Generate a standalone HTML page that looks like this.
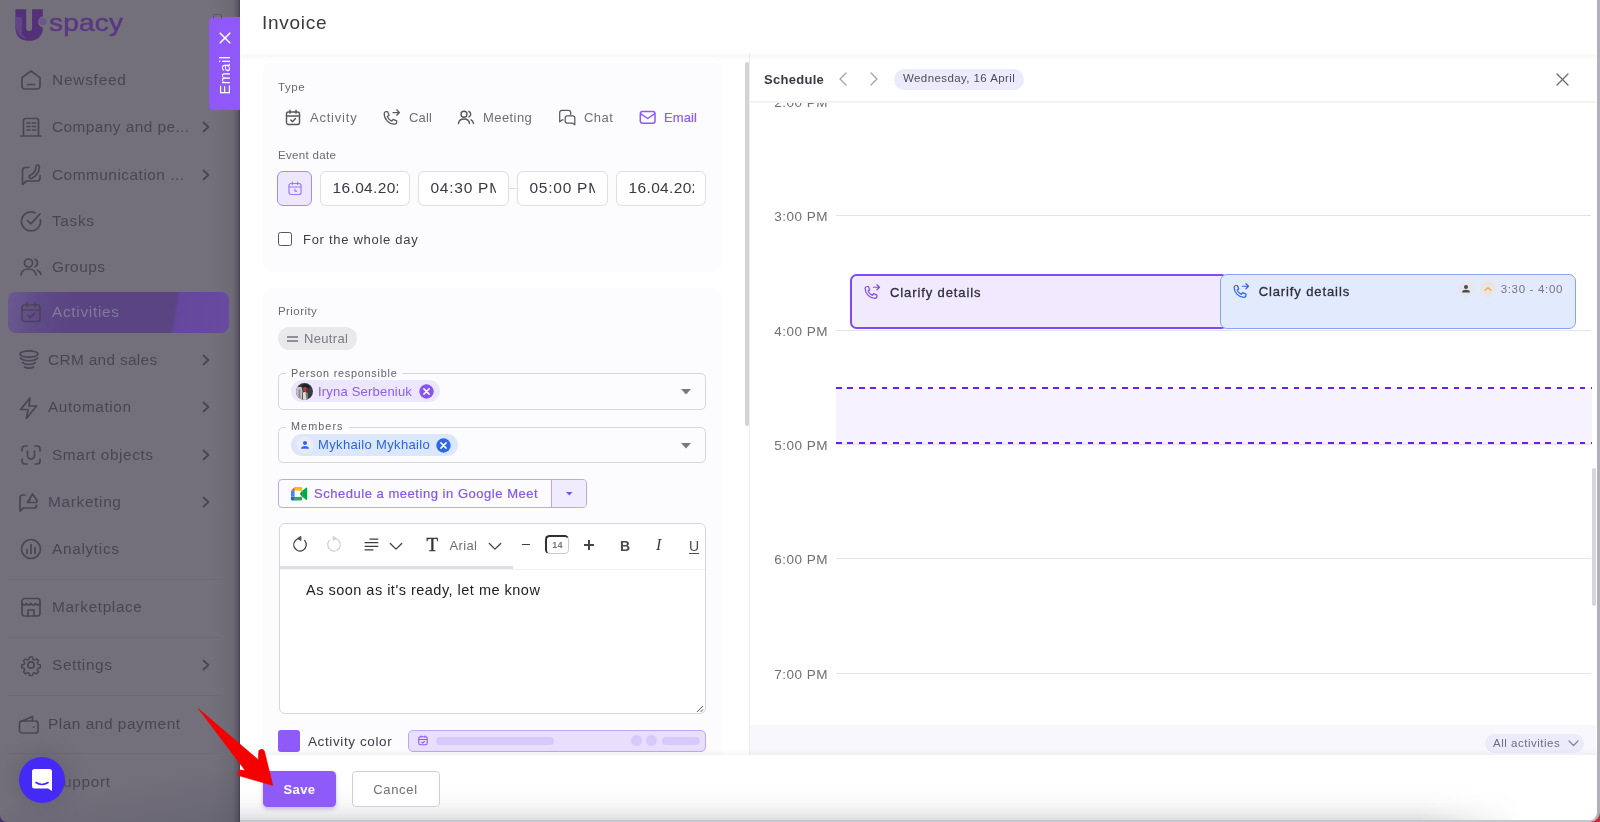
<!DOCTYPE html>
<html lang="en">
<head>
<meta charset="utf-8">
<title>Invoice</title>
<style>
*{box-sizing:border-box;margin:0;padding:0}
html,body{width:1600px;height:822px;overflow:hidden;background:#fff}
body{font-family:"Liberation Sans",Arial,sans-serif;color:#3a3946;position:relative}
.abs{position:absolute}
.t{position:absolute;white-space:nowrap;line-height:1}
svg{position:absolute;overflow:visible}
/* sidebar */
#side{position:absolute;left:0;top:0;width:240px;height:822px;background:#73707c;overflow:hidden;border-bottom-left-radius:7px}
#side .strip{position:absolute;left:212px;top:0;width:28px;height:822px;background:linear-gradient(90deg,#73707c 0,#716e7a 30%,#6d6a76 75%,#6c6875 100%)}
#side .edge{position:absolute;left:233px;top:0;width:7px;height:822px;background:linear-gradient(90deg,#6c6875 0,#625e6b 45%,#5c5865 70%,#4d4857 88%,#4b4655 100%)}
#side .it{position:absolute;white-space:nowrap;font-size:15.400px;line-height:20px;color:#4b4553;margin-top:-.6px}
#side .dv{position:absolute;left:8px;width:214px;height:1px;background:#6c6975}
#side svg{fill:none;stroke:#4b4553;stroke-width:1.7;stroke-linecap:round;stroke-linejoin:round}
#side .chev{stroke-width:1.7}
/* main */
#main{position:absolute;left:240px;top:0;width:1357px;height:822px;background:#fff;overflow:hidden}
#rightedge{position:absolute;left:1596.500px;top:0;width:3.500px;height:822px;background:#b1b0ba}
.lbl{font-size:11.5px;color:#6b6a76;letter-spacing:.2px}
.card{position:absolute;left:23px;width:459px;background:#fcfbfe;border-radius:8px}
.inp{position:absolute;top:171.400px;height:34.600px;border:1px solid #dedee3;border-radius:6px;background:#fff;overflow:hidden;font-size:15.500px;color:#3a3946;line-height:32.600px;white-space:nowrap}
.fs{position:absolute;border:1px solid #d7d7dc;border-radius:5px}
.leg{position:absolute;background:#fcfbfe;font-size:10.800px;color:#62616d;line-height:12px;padding:0 5px;white-space:nowrap;letter-spacing:.25px}
.hl{position:absolute;left:596px;width:755px;height:1px;background:#e3e3e7}
.hr{position:absolute;font-size:13.500px;color:#6f6e7a;width:80px;text-align:right;left:508px;line-height:14px;letter-spacing:.5px}
</style>
</head>
<body>
<div id="root" style="position:absolute;left:0;top:0;width:1600px;height:822px;will-change:transform">

<!-- ================= SIDEBAR ================= -->
<div class="abs" style="left:0;top:808px;width:14px;height:14px;background:#47306f"></div>
<div id="side">
  <div class="strip"></div>
  <div class="edge"></div>
  <div class="abs" style="left:0;top:770px;width:240px;height:52px;background:linear-gradient(170deg,rgba(50,45,65,0) 35%,rgba(50,45,65,.16) 100%)"></div>
<!--SIDE-START-->
  <!-- logo -->
  <div class="abs" style="left:0;top:0;width:130px;height:50px"><span class="t" style="left:15.700px;top:7.100px;font-size:37px;font-weight:bold;color:#543079;-webkit-text-stroke:5.640px #543079;transform:scaleX(.985);transform-origin:0 0">U</span><span class="t" style="left:49px;top:11.200px;font-size:24.800px;color:#5a3782;-webkit-text-stroke:.45px #5a3782;transform:scaleX(1.13);transform-origin:0 0;letter-spacing:.2px">spacy</span></div>
  <svg style="left:0;top:0;stroke:none" width="130" height="50" viewBox="0 0 130 50">
    <circle cx="43.900" cy="22" r="5.800" fill="#73707c" stroke="none"/>
    <rect x="42.900" y="9" width="4" height="8" fill="#73707c" stroke="none"/>
    <path d="M15.600 17h6.500v17l4 5a13 13 0 0 1-10.500-12z" fill="#6b5690" stroke="none" opacity=".55"/>
    <circle cx="43" cy="21.600" r="3.700" fill="#6b5690" stroke="none"/>
  </svg>

  <!-- Email tab -->
  <div class="abs" style="left:209px;top:17px;width:31px;height:92.500px;background:#9058f9;border-radius:5.500px 0 0 5.500px"></div>
  <div class="abs" style="left:212.800px;top:13.500px;width:9.700px;height:5px;border:1.500px solid #5d5a68;border-bottom:none;border-radius:2px 2px 0 0"></div>
  <svg style="left:219px;top:32.400px;stroke:#fff;stroke-width:1.600" width="12" height="12" viewBox="0 0 12 12"><path d="M1.2 1.2l9.6 9.6M10.8 1.2l-9.6 9.6"/></svg>
  <div class="t" style="left:225px;top:75px;font-size:14.5px;color:#fff;letter-spacing:.5px;transform:translate(-50%,-50%) rotate(-90deg)">Email</div>

  <!-- Newsfeed -->
  <svg style="left:19px;top:68px" width="24" height="24" viewBox="0 0 24 24"><path d="M3 9.6L12 3l9 6.600V18.500a2.500 2.500 0 0 1-2.500 2.500h-13A2.500 2.500 0 0 1 3 18.500z"/><path d="M8.500 16.500h7"/></svg>
  <div class="it" style="left:52px;top:71px;letter-spacing:0.78px">Newsfeed</div>

  <!-- Company -->
  <svg style="left:19px;top:115px" width="24" height="24" viewBox="0 0 24 24"><path d="M4.500 21V5.500A2 2 0 0 1 6.500 3.500h11a2 2 0 0 1 2 2V21M2 21h20"/><path d="M8 8h3M13.500 8h3M8 11.500h3M13.500 11.500h3M8 15h3M13.500 15h3"/></svg>
  <div class="it" style="left:52px;top:118px;letter-spacing:0.44px">Company and pe...</div>
  <svg class="chev" style="left:200px;top:121px" width="12" height="12" viewBox="0 0 12 12"><path d="M3.500 1.500L8.500 6l-5 4.500"/></svg>

  <!-- Communication -->
  <svg style="left:19px;top:162px" width="24" height="26" viewBox="0 0 24 26"><path d="M10 5.500H6.500A3 3 0 0 0 3.500 8.500v14l4-3.500h10.500a3 3 0 0 0 3-3v-2.500"/><path d="M18.700 4.800C18.600 9.200 16.200 12.800 12 14.800" stroke-width="5"/><path d="M18.700 4.800C18.600 9.200 16.200 12.800 12 14.800" stroke="#73707c" stroke-width="1.700"/></svg>
  <div class="it" style="left:52px;top:166px;letter-spacing:0.50px">Communication ...</div>
  <svg class="chev" style="left:200px;top:169px" width="12" height="12" viewBox="0 0 12 12"><path d="M3.500 1.500L8.500 6l-5 4.500"/></svg>

  <!-- Tasks -->
  <svg style="left:19px;top:209px" width="24" height="24" viewBox="0 0 24 24"><path d="M21.300 10.500A9.500 9.500 0 1 1 16 3.800"/><path d="M8.500 11.500l3.300 3.300L21 4.800"/></svg>
  <div class="it" style="left:52px;top:212px;letter-spacing:0.66px">Tasks</div>

  <!-- Groups -->
  <svg style="left:19px;top:255px" width="24" height="24" viewBox="0 0 24 24"><circle cx="9.500" cy="8" r="4"/><path d="M2 20c.5-4 3.500-6 7.500-6s7 2 7.500 6"/><path d="M16 4.300a4 4 0 0 1 0 7.400M18.500 15.200c1.800.8 3 2.300 3.500 4.300"/></svg>
  <div class="it" style="left:52px;top:258px;letter-spacing:0.51px">Groups</div>

  <!-- Activities (active) -->
  <div class="abs" style="left:8px;top:292px;width:221px;height:41px;border-radius:8px;background:linear-gradient(100deg,#6b5b91 0%,#5f4b88 14%,#5a4482 30%,#5a4482 74%,#65489c 76%,#684aa1 100%)"></div>
  <svg style="left:19px;top:300px" width="24" height="24" viewBox="0 0 24 24"><rect x="3" y="5" width="18" height="16.500" rx="2.500"/><path d="M3 10h18M8 2.500v4M16 2.500v4M9 15.500l2.200 2.200l4.300-4.300"/></svg>
  <div class="it" style="left:52px;top:303px;color:#807b97;letter-spacing:0.69px">Activities</div>

  <!-- CRM -->
  <svg style="left:17px;top:348px" width="24" height="24" viewBox="0 0 24 24"><ellipse cx="12" cy="6" rx="9" ry="3.200"/><path d="M3.500 10c1.500 2 5 2.700 8.500 2.700s7-.7 8.500-2.700M5.500 14.500c1.500 1.500 4 2 6.500 2s5-.5 6.500-2M7.500 19c1.200.9 2.800 1.200 4.500 1.200s3.300-.3 4.500-1.200"/></svg>
  <div class="it" style="left:48px;top:351px;letter-spacing:0.33px">CRM and sales</div>
  <svg class="chev" style="left:200px;top:354px" width="12" height="12" viewBox="0 0 12 12"><path d="M3.500 1.500L8.500 6l-5 4.500"/></svg>

  <!-- Automation -->
  <svg style="left:17px;top:395px" width="24" height="26" viewBox="0 0 24 26"><path d="M13 3L3.500 14.500H11L9.500 23.500L19.500 11H12z"/></svg>
  <div class="it" style="left:48px;top:398px;letter-spacing:0.57px">Automation</div>
  <svg class="chev" style="left:200px;top:401px" width="12" height="12" viewBox="0 0 12 12"><path d="M3.500 1.500L8.500 6l-5 4.500"/></svg>

  <!-- Smart objects -->
  <svg style="left:19px;top:443px" width="24" height="24" viewBox="0 0 24 24"><path d="M3 8V6a3 3 0 0 1 3-3h2M16 3h2a3 3 0 0 1 3 3v2M21 16v2a3 3 0 0 1-3 3h-2M8 21H6a3 3 0 0 1-3-3v-2"/><path d="M8.500 8v4.500a3.500 3.500 0 0 0 7 0V8"/></svg>
  <div class="it" style="left:52px;top:446px;letter-spacing:0.58px">Smart objects</div>
  <svg class="chev" style="left:200px;top:449px" width="12" height="12" viewBox="0 0 12 12"><path d="M3.500 1.500L8.500 6l-5 4.500"/></svg>

  <!-- Marketing -->
  <svg style="left:17px;top:490px" width="24" height="24" viewBox="0 0 24 24"><path d="M8 5H5.500A2.500 2.500 0 0 0 3 7.500V21l3.500-3H17a2.500 2.500 0 0 0 2.500-2.500V15"/><path d="M10.500 12.500L15.500 4l4.500 6.500c.6 1.200-.3 2-1.500 2z"/><path d="M11 11.500l2-1.800"/></svg>
  <div class="it" style="left:48px;top:493px;letter-spacing:0.67px">Marketing</div>
  <svg class="chev" style="left:200px;top:496px" width="12" height="12" viewBox="0 0 12 12"><path d="M3.500 1.500L8.500 6l-5 4.500"/></svg>

  <!-- Analytics -->
  <svg style="left:19px;top:537px" width="24" height="24" viewBox="0 0 24 24"><circle cx="12" cy="12" r="9.500"/><path d="M8 16.500v-4M12 16.500V7.500M16 16.500v-6"/></svg>
  <div class="it" style="left:52px;top:540px;letter-spacing:0.67px">Analytics</div>

  <div class="dv" style="top:579px"></div>
  <!-- Marketplace -->
  <svg style="left:19px;top:595px" width="24" height="24" viewBox="0 0 24 24"><rect x="3" y="3.500" width="18" height="17.500" rx="2.500"/><path d="M3 8.500c1 2 3.500 2 4.500 0c1 2 3.500 2 4.500 0c1 2 3.500 2 4.500 0c1 2 3.500 2 4.500 0M9 21v-6h6v6"/></svg>
  <div class="it" style="left:52px;top:598px;letter-spacing:0.61px">Marketplace</div>

  <div class="dv" style="top:637px"></div>
  <!-- Settings -->
  <svg style="left:19px;top:653px" width="24" height="24" viewBox="0 0 24 24"><circle cx="12" cy="12" r="3.200"/><path d="M10.300 3h3.400l.5 2.600l1.800.8l2.200-1.500l2.400 2.400l-1.500 2.200l.8 1.800l2.600.5v3.400l-2.600.5l-.8 1.800l1.500 2.200l-2.400 2.400l-2.200-1.500l-1.800.8l-.5 2.600h-3.400l-.5-2.600l-1.800-.8l-2.200 1.500l-2.400-2.400l1.500-2.200l-.8-1.800L1.500 15.200v-3.400l2.600-.5l.8-1.800L3.400 7.300l2.400-2.400L8 6.400l1.800-.8z" transform="translate(1.440 1.440) scale(.88)"/></svg>
  <div class="it" style="left:52px;top:656px;letter-spacing:0.62px">Settings</div>
  <svg class="chev" style="left:200px;top:659px" width="12" height="12" viewBox="0 0 12 12"><path d="M3.500 1.500L8.500 6l-5 4.500"/></svg>

  <div class="dv" style="top:695px"></div>
  <!-- Plan and payment -->
  <svg style="left:17px;top:712px" width="24" height="24" viewBox="0 0 24 24"><path d="M4 9.500L15.500 4.500V9"/><rect x="2.500" y="9" width="18.500" height="12" rx="2.500"/><path d="M16.500 15h.5"/></svg>
  <div class="it" style="left:48px;top:715px;letter-spacing:0.53px">Plan and payment</div>

  <div class="dv" style="top:753px"></div>
  <!-- Support -->
  <div class="it" style="left:52px;top:773px;letter-spacing:0.68px">Support</div>
  <!-- intercom -->
  <div class="abs" style="left:19px;top:757px;width:46px;height:46px;border-radius:50%;background:#4529f4;box-shadow:0 0 16px 8px rgba(96,92,106,.4)"></div>
  <svg style="left:31px;top:768px;stroke:none" width="22" height="24" viewBox="0 0 22 24"><path d="M3.500 1h15A2.500 2.500 0 0 1 21 3.500V23l-4-2.500H3.500A2.500 2.500 0 0 1 1 18V3.500A2.500 2.500 0 0 1 3.500 1z" fill="#fff" stroke="none"/><path d="M5 14.500c3.500 2.600 8.500 2.600 12 0" fill="none" stroke="#4529f4" stroke-width="1.600" stroke-linecap="round"/></svg>
<!--SIDE-END-->
</div>

<!-- ================= MAIN PANEL ================= -->
<div id="main">
<!--LEFT-START-->
<!-- ======== LEFT FORM COLUMN (coords relative to #main: page x - 240) ======== -->
<div class="abs" id="leftcol" style="left:0;top:54px;width:509px;height:701px;overflow:hidden">
 <div class="abs" style="left:0;top:-54px;width:509px;height:822px">

  <!-- card 1 -->
  <div class="card" style="top:62px;height:210px"></div>
  <div class="t lbl" style="left:38px;top:81.500px;letter-spacing:0.59px">Type</div>

  <!-- type row -->
  <svg style="left:45px;top:109px;fill:none;stroke:#55545f;stroke-width:1.4;stroke-linecap:round;stroke-linejoin:round" width="16" height="17" viewBox="0 0 16 17"><rect x="1.500" y="3" width="13" height="12.500" rx="2"/><path d="M1.500 7h13M5 1.200v3M11 1.200v3M5.800 11l1.700 1.700l3-3.200"/></svg>
  <div class="t" style="left:70px;top:110.500px;font-size:13px;color:#6f6e7a;letter-spacing:0.78px">Activity</div>

  <svg style="left:143px;top:107.500px;fill:none;stroke:#5a5964;stroke-width:1.250;stroke-linecap:round;stroke-linejoin:round" width="18" height="18" viewBox="0 0 18 18"><path d="M1.200 5.800c0-1.200.9-2.100 2.100-2.100h1.300l1.500 3.600l-1.800 1.300c.9 2.100 2.400 3.600 4.500 4.500l1.300-1.800l3.600 1.500v1.300c0 1.200-.9 2.100-2.100 2.100C6 16.200 1.200 11.400 1.200 5.800z"/><path d="M10 4.500h6.300M13.700 1.800l2.700 2.700l-2.700 2.700"/></svg>
  <div class="t" style="left:169px;top:110.500px;font-size:13px;color:#6f6e7a;letter-spacing:0.17px">Call</div>

  <svg style="left:217px;top:109px;fill:none;stroke:#55545f;stroke-width:1.4;stroke-linecap:round;stroke-linejoin:round" width="18" height="17" viewBox="0 0 18 17"><circle cx="7" cy="5.300" r="3"/><path d="M1.500 14.500c.3-3 2.500-4.500 5.500-4.500s5.200 1.500 5.500 4.500"/><path d="M11.800 2.500a3 3 0 0 1 0 5.600M14 10.800c1.400.6 2.200 1.900 2.500 3.700"/></svg>
  <div class="t" style="left:243px;top:110.500px;font-size:13px;color:#6f6e7a;letter-spacing:0.42px">Meeting</div>

  <svg style="left:318px;top:108.500px;fill:none;stroke:#5a5964;stroke-width:1.250;stroke-linecap:round;stroke-linejoin:round" width="18" height="17" viewBox="0 0 18 17"><path d="M5.200 10.800H4.300L1.700 12.800V3.500a2.200 2.200 0 0 1 2.200-2.200h6.600a2.200 2.200 0 0 1 2.200 2.200v2.300"/><path d="M9.200 6.800h5.600a2 2 0 0 1 2 2V15.800l-2.400-1.800H9.200a2 2 0 0 1-2-2V8.800a2 2 0 0 1 2-2z"/></svg>
  <div class="t" style="left:344px;top:110.500px;font-size:13px;color:#6f6e7a;letter-spacing:0.44px">Chat</div>

  <svg style="left:399px;top:110px;fill:none;stroke:#8e5af8;stroke-width:1.500;stroke-linecap:round;stroke-linejoin:round" width="18" height="15" viewBox="0 0 18 15"><rect x="1.300" y="1.500" width="14.700" height="11.700" rx="2.200"/><path d="M1.800 3.800l6.900 4.700l6.800-4.700"/></svg>
  <div class="t" style="left:424px;top:110.500px;font-size:13px;color:#8e5af8;-webkit-text-stroke:.2px #8e5af8;letter-spacing:0.11px">Email</div>

  <div class="t lbl" style="left:38px;top:150px;letter-spacing:0.32px">Event date</div>
  <!-- calendar btn -->
  <div class="abs" style="left:37.400px;top:171.400px;width:34.400px;height:34.600px;border:1px solid #a98bf8;border-radius:6px;background:#ede7fe"></div>
  <svg style="left:48px;top:181px;fill:none;stroke:#9b78f5;stroke-width:1.2;stroke-linecap:round;stroke-linejoin:round" width="14" height="15" viewBox="0 0 14 15"><rect x="1" y="2.500" width="12" height="11" rx="2"/><path d="M1 6h12M4.300 1v2.500M9.700 1v2.500M7 8.200v2h1.600"/></svg>
  <div class="inp" style="left:80px;width:90px"><div class="abs" style="left:11.500px;top:0;width:65px;height:32.600px;overflow:hidden;letter-spacing:.36px">16.04.2025</div></div>
  <div class="inp" style="left:178px;width:91px"><div class="abs" style="left:11.500px;top:0;width:65px;height:32.600px;overflow:hidden;letter-spacing:.75px">04:30 PM</div></div>
  <div class="abs" style="left:269px;top:188px;width:8px;height:1px;background:#dcdce1"></div>
  <div class="inp" style="left:277px;width:91px"><div class="abs" style="left:11.500px;top:0;width:65px;height:32.600px;overflow:hidden;letter-spacing:.75px">05:00 PM</div></div>
  <div class="inp" style="left:376px;width:90px"><div class="abs" style="left:11.500px;top:0;width:65px;height:32.600px;overflow:hidden;letter-spacing:.36px">16.04.2025</div></div>
  <!-- checkbox -->
  <div class="abs" style="left:37.500px;top:232px;width:14px;height:14px;border:1.500px solid #56555f;border-radius:2.500px;background:#fdfcff"></div>
  <div class="t" style="left:63px;top:233px;font-size:13px;color:#3d3c49;letter-spacing:0.71px">For the whole day</div>

  <!-- card 2 -->
  <div class="card" style="top:288px;height:480px"></div>
  <div class="t lbl" style="left:38px;top:306.300px;letter-spacing:0.43px">Priority</div>
  <div class="abs" style="left:38px;top:327px;width:79px;height:22.500px;border-radius:12px;background:#e9e9ec"></div>
  <div class="abs" style="left:47px;top:336.200px;width:11px;height:1.400px;background:#908f99"></div>
  <div class="abs" style="left:47px;top:340.400px;width:11px;height:1.400px;background:#908f99"></div>
  <div class="t" style="left:64px;top:332px;font-size:13px;color:#7b7a85;letter-spacing:0.32px">Neutral</div>

  <!-- person responsible -->
  <div class="fs" style="left:37.700px;top:372.600px;width:428.600px;height:37px"></div>
  <div class="leg" style="left:46px;top:366.500px"><span style="display:inline-block;letter-spacing:0.78px">Person responsible</span></div>
  <div class="abs" style="left:51px;top:380px;width:149px;height:22px;border-radius:11px;background:#ece6fe"></div>
  <!-- avatar -->
  <svg style="left:55.500px;top:382.500px" width="17" height="17" viewBox="0 0 17 17"><defs><clipPath id="av"><circle cx="8.500" cy="8.500" r="8.500"/></clipPath></defs><g clip-path="url(#av)"><rect width="17" height="17" fill="#3b3a3f"/><path d="M0 4h5.500l1 4l-.5 9H0z" fill="#c4c3c6"/><path d="M2.500 6.500h2v10h-2z" fill="#8d8c90"/><path d="M7 9.500l3-1l1.500 8.500H7z" fill="#d9d8db"/><path d="M9.500 9l2.500 1v7h-1.500z" fill="#77767b"/><rect x="7.300" y="4.300" width="3.200" height="3.700" rx="1" fill="#c8323e"/><path d="M5.500 2.500l3-1.500l4 1l2 3h-3l-2-1.500l-2 .5z" fill="#1e1d22"/></g></svg>
  <div class="t" style="left:78px;top:384.500px;font-size:13px;color:#8b5ff0;letter-spacing:0.20px">Iryna Serbeniuk</div>
  <svg style="left:179px;top:383.500px" width="15" height="15" viewBox="0 0 15 15"><circle cx="7.500" cy="7.500" r="7.200" fill="#8753ee"/><path d="M4.900 4.900l5.200 5.200M10.100 4.900l-5.200 5.200" stroke="#fff" stroke-width="1.500" stroke-linecap="round"/></svg>
  <svg style="left:441px;top:389px" width="10" height="6" viewBox="0 0 10 6"><path d="M0 0h10L5 5.500z" fill="#787782"/></svg>

  <!-- members -->
  <div class="fs" style="left:37.700px;top:426.700px;width:428.600px;height:36.800px"></div>
  <div class="leg" style="left:46px;top:419.800px"><span style="display:inline-block;letter-spacing:1.08px">Members</span></div>
  <div class="abs" style="left:51px;top:434px;width:167px;height:22px;border-radius:11px;background:#dde7fc"></div>
  <svg style="left:56.500px;top:437px" width="16" height="16" viewBox="0 0 16 16"><circle cx="8" cy="8" r="8.300" fill="#ececf3"/><circle cx="8" cy="6" r="2" fill="#2b68ee"/><path d="M4 11.800c0-2.100 1.900-2.900 4-2.900s4 .8 4 2.900z" fill="#2b68ee"/></svg>
  <div class="t" style="left:78px;top:438px;font-size:13px;color:#2765ec;letter-spacing:0.35px">Mykhailo Mykhailo</div>
  <svg style="left:196px;top:437.500px" width="15" height="15" viewBox="0 0 15 15"><circle cx="7.500" cy="7.500" r="7.200" fill="#2b68ee"/><path d="M4.900 4.900l5.200 5.200M10.100 4.900l-5.200 5.200" stroke="#fff" stroke-width="1.500" stroke-linecap="round"/></svg>
  <svg style="left:441px;top:442.500px" width="10" height="6" viewBox="0 0 10 6"><path d="M0 0h10L5 5.500z" fill="#787782"/></svg>

  <!-- google meet button -->
  <div class="abs" style="left:37.500px;top:479px;width:309px;height:29px;border:1px solid #bda6f9;border-radius:4px;background:#fcfbff;overflow:hidden"><div class="abs" style="left:272px;top:0;width:36px;height:29px;background:#f0ebfd;border-left:1px solid #bda6f9"></div></div>
  <svg style="left:50.800px;top:487.300px" width="16.200" height="13.500" viewBox="0 0 18 15"><path d="M0 4.200L4.200 0v4.200z" fill="#ea4335"/><path d="M4.200 0H11a1.400 1.400 0 0 1 1.400 1.400V4.200H4.200z" fill="#fbbc04"/><path d="M0 4.200h4.200v6.500H0z" fill="#4285f4"/><path d="M0 10.700h4.200v4.200H1.400A1.400 1.400 0 0 1 0 13.500z" fill="#1967d2"/><path d="M4.200 10.700h8.200v2.800a1.400 1.400 0 0 1-1.400 1.400H4.200z" fill="#34a853"/><path d="M12.400 4.200V10.700l4.400 3.500c.5.400 1.200.1 1.200-.5V1.300c0-.7-.7-1-1.200-.6z" fill="#00ac47"/><path d="M12.400 4.200L9.700 7.500l2.700 3.200z" fill="#188038"/><rect x="4.200" y="4.200" width="6" height="6.500" fill="#fff"/></svg>
  <div class="t" style="left:74px;top:486.500px;font-size:13px;color:#8457f0;-webkit-text-stroke:.2px #8457f0;letter-spacing:0.53px">Schedule a meeting in Google Meet</div>
  <svg style="left:326px;top:491.800px" width="6.600" height="3.700" viewBox="0 0 9 5"><path d="M0 0h9L4.500 4.800z" fill="#7d52e6"/></svg>

  <!-- editor -->
  <div class="abs" style="left:38.500px;top:522.800px;width:427px;height:191px;border:1px solid #d6d6dc;border-radius:6px;background:#fff;overflow:hidden">
    <div class="abs" style="left:0;top:42.300px;width:233.500px;height:3.400px;background:#dfdfe4"></div>
    <div class="abs" style="left:0;top:45.700px;width:427px;height:1px;background:#f0f0f3"></div>
  </div>
  <!-- editor toolbar (icons y center = 545) -->
  <svg style="left:52px;top:536px;fill:none;stroke:#3d3c49;stroke-width:1.200;stroke-linecap:round;stroke-linejoin:round" width="16" height="16" viewBox="0 0 16 16"><path d="M8 2.400a6.300 6.300 0 1 0 4.600 2"/><path d="M8.600 .4L5.700 2.400L8.600 4.400z" fill="#3d3c49" stroke-width=".8"/></svg>
  <svg style="left:86px;top:536px;fill:none;stroke:#cfced5;stroke-width:1.200;stroke-linecap:round;stroke-linejoin:round" width="16" height="16" viewBox="0 0 16 16"><path d="M8 2.400a6.300 6.300 0 1 1-4.600 2"/><path d="M7.400 .4l2.900 2l-2.900 2z" fill="#cfced5" stroke-width=".8"/></svg>
  <svg style="left:124px;top:538px;fill:none;stroke:#3d3c49;stroke-width:1.300;stroke-linecap:butt" width="15" height="13" viewBox="0 0 15 13"><path d="M5.400 1.200h8.900M.6 4.700h13.700M.6 8.300h13.700M.6 11.900h8.900"/></svg>
  <svg style="left:149px;top:542px;fill:none;stroke:#3d3c49;stroke-width:1.200;stroke-linecap:round;stroke-linejoin:round" width="14" height="9" viewBox="0 0 14 9"><path d="M1.300 1.500L7 7.200l5.700-5.700"/></svg>
  <div class="t" style="left:186.500px;top:535px;font-family:'Liberation Serif',serif;font-size:19px;color:#33323d;-webkit-text-stroke:.35px #33323d">T</div>
  <div class="t" style="left:209.500px;top:538.500px;font-size:13px;color:#6f6e7a;letter-spacing:0.33px">Arial</div>
  <svg style="left:248px;top:542px;fill:none;stroke:#3d3c49;stroke-width:1.200;stroke-linecap:round;stroke-linejoin:round" width="14" height="9" viewBox="0 0 14 9"><path d="M1.300 1.500L7 7.200l5.700-5.700"/></svg>
  <div class="abs" style="left:282px;top:543.500px;width:8.300px;height:1.600px;background:#3d3c49"></div>
  <div class="abs" style="left:305.300px;top:534.900px;width:24.200px;height:19px;border:1.500px solid #cbcad1;border-top:2px solid #2f2e39;border-left:2px solid #2f2e39;border-radius:4.500px;background:#fff"></div>
  <div class="t" style="left:305.300px;top:541px;width:24.200px;text-align:center;font-size:9px;font-weight:bold;color:#77767f;letter-spacing:.2px">14</div>
  <div class="abs" style="left:344px;top:544.050px;width:10px;height:1.500px;background:#45444f"></div>
  <div class="abs" style="left:348.250px;top:539.800px;width:1.500px;height:10px;background:#45444f"></div>
  <div class="t" style="left:380px;top:538.500px;font-size:14px;font-weight:bold;color:#4a4954">B</div>
  <div class="t" style="left:416px;top:537.300px;font-family:'Liberation Serif',serif;font-size:16px;font-style:italic;color:#3d3c49">I</div>
  <div class="abs" style="left:447px;top:530px;width:17.200px;height:30px;overflow:hidden"><div class="t" style="left:2px;top:8.500px;font-size:14px;color:#4a4954;text-decoration:underline;text-underline-offset:2px;text-decoration-thickness:1px">U</div></div>
  <div class="t" style="left:66px;top:583px;font-size:14.500px;color:#22212b;letter-spacing:0.49px">As soon as it's ready, let me know</div>
  <svg style="left:456px;top:705px" width="8" height="8" viewBox="0 0 8 8"><path d="M7 1L1 7M7 4.500L4.500 7" stroke="#55545f" stroke-width="1" fill="none"/></svg>

  <!-- activity color -->
  <div class="abs" style="left:37.700px;top:729.700px;width:22.500px;height:22.300px;border-radius:3px;background:#8e5af8"></div>
  <div class="t" style="left:68px;top:734.700px;font-size:13.500px;color:#3d3c49;letter-spacing:0.61px">Activity color</div>
  <div class="abs" style="left:168px;top:729.700px;width:298px;height:22.500px;border:1px solid #bda6f9;border-radius:5px;background:#e8dffd"></div>
  <svg style="left:177.500px;top:735.300px;fill:none;stroke:#8e5af8;stroke-width:1.100" width="10" height="11" viewBox="0 0 10 11"><rect x=".8" y="1.800" width="8.400" height="8" rx="1.500"/><path d="M.8 4.500h8.400M3 .6v2M7 .6v2M3.500 7l1.200 1.100l2-2"/></svg>
  <div class="abs" style="left:196px;top:736.800px;width:118px;height:8px;border-radius:4px;background:#d8c9fb"></div>
  <div class="abs" style="left:391px;top:735.300px;width:11px;height:11px;border-radius:50%;background:#d8c9fb"></div>
  <div class="abs" style="left:406px;top:735.300px;width:11px;height:11px;border-radius:50%;background:#d8c9fb"></div>
  <div class="abs" style="left:422px;top:736.800px;width:38px;height:8px;border-radius:4px;background:#d8c9fb"></div>

  <!-- left scrollbar -->
  <div class="abs" style="left:504.500px;top:62px;width:4px;height:364px;background:#d2d2d7;border-radius:2px"></div>
 </div>
</div>
<div class="abs" style="left:509px;top:54px;width:1px;height:701px;background:#ececf0"></div>
<!--LEFT-END-->
<!--RIGHT-START-->
<!-- ======== RIGHT: SCHEDULE (coords relative to #main: page x - 240) ======== -->
<div class="abs" id="sched" style="left:510px;top:54px;width:846px;height:701px;overflow:hidden;background:#fff">
 <div class="abs" style="left:-510px;top:-54px;width:1357px;height:822px">
  <!-- hour labels & lines -->
  <div class="abs" style="left:510px;top:102.500px;width:846px;height:12px;overflow:hidden"><div class="hr" style="left:-2px;top:-7px">2:00 PM</div></div>
  <div class="hr" style="top:210.0px">3:00 PM</div><div class="hl" style="top:215.400px"></div>
  <div class="hr" style="top:324.5px">4:00 PM</div><div class="hl" style="top:329.500px"></div>
  <div class="hr" style="top:439.0px">5:00 PM</div><div class="hl" style="top:444px"></div>
  <div class="hr" style="top:553.0px">6:00 PM</div><div class="hl" style="top:558px"></div>
  <div class="hr" style="top:667.5px">7:00 PM</div><div class="hl" style="top:672.500px"></div>

  <!-- selection band -->
  <div class="abs" style="left:596px;top:388px;width:756px;height:55.500px;background:#f6f2ff"></div>
  <div class="abs" style="left:596px;top:387.200px;width:756px;height:2px;background:repeating-linear-gradient(90deg,#6a22e0 0 5.700px,transparent 5.700px 11.440px);background-position:0 0"></div>
  <div class="abs" style="left:596px;top:442.300px;width:756px;height:2px;background:repeating-linear-gradient(90deg,#6a22e0 0 5.700px,transparent 5.700px 11.440px);background-position:0 0"></div>

  <!-- event 1 -->
  <div class="abs" style="left:610px;top:273.800px;width:378px;height:55px;border:2px solid #8448f5;border-radius:6.500px;background:#f1eafe"></div>
  <svg style="left:623.500px;top:282.500px;fill:none;stroke:#8448f5;stroke-width:1.300;stroke-linecap:round;stroke-linejoin:round" width="17" height="17" viewBox="0 0 18 18"><path d="M1.200 5.800c0-1.200.9-2.100 2.100-2.100h1.300l1.500 3.600l-1.800 1.300c.9 2.100 2.400 3.600 4.500 4.500l1.300-1.800l3.600 1.500v1.300c0 1.200-.9 2.100-2.100 2.100C6 16.200 1.200 11.400 1.200 5.800z"/><path d="M10 4.500h6.300M13.700 1.800l2.700 2.700l-2.700 2.700"/></svg>
  <div class="t" style="left:650px;top:285.500px;font-size:13px;color:#2f2e3a;-webkit-text-stroke:.3px #2f2e3a;letter-spacing:0.89px">Clarify details</div>

  <!-- event 2 -->
  <div class="abs" style="left:979.700px;top:274px;width:356.300px;height:54.500px;border:1px solid #86a4f2;border-radius:7px;background:#e2eafd"></div>
  <svg style="left:992.500px;top:281.500px;fill:none;stroke:#2f66e0;stroke-width:1.300;stroke-linecap:round;stroke-linejoin:round" width="17" height="17" viewBox="0 0 18 18"><path d="M1.200 5.800c0-1.200.9-2.100 2.100-2.100h1.300l1.500 3.600l-1.800 1.300c.9 2.100 2.400 3.600 4.500 4.500l1.300-1.800l3.600 1.500v1.300c0 1.200-.9 2.100-2.100 2.100C6 16.200 1.200 11.400 1.200 5.800z"/><path d="M10 4.500h6.300M13.700 1.800l2.700 2.700l-2.700 2.700"/></svg>
  <div class="t" style="left:1018.700px;top:284.500px;font-size:13px;color:#2f2e3a;-webkit-text-stroke:.3px #2f2e3a;letter-spacing:0.89px">Clarify details</div>
  <svg style="left:1217.500px;top:281px" width="16" height="16" viewBox="0 0 16 16"><circle cx="8" cy="8" r="8" fill="#e6e6ed"/><circle cx="8" cy="6" r="2" fill="#4a4954"/><path d="M4 11.600c0-2.100 1.900-2.800 4-2.800s4 .7 4 2.800z" fill="#4a4954"/></svg>
  <svg style="left:1239.500px;top:281px" width="16" height="16" viewBox="0 0 16 16"><circle cx="8" cy="8" r="8" fill="#e9e5e3"/><path d="M5.200 9.300L8 6.600l2.800 2.700" fill="none" stroke="#f2a03d" stroke-width="1.200" stroke-linecap="round" stroke-linejoin="round"/></svg>
  <div class="t" style="left:1260.700px;top:283.500px;font-size:11.500px;color:#77767f;letter-spacing:0.67px">3:30 - 4:00</div>

  <!-- schedule header -->
  <div class="abs" style="left:510px;top:54px;width:846px;height:47px;background:#fff"></div><div class="abs" style="left:510px;top:101px;width:846px;height:2px;background:#f3f3f6"></div>
  <div class="t" style="left:524px;top:72.500px;font-size:13px;font-weight:bold;color:#3a3946;letter-spacing:0.29px">Schedule</div>
  <svg style="left:598px;top:72px;fill:none;stroke:#a3a2ac;stroke-width:1.300;stroke-linecap:round;stroke-linejoin:round" width="10" height="14" viewBox="0 0 10 14"><path d="M8 1L2 7l6 6"/></svg>
  <svg style="left:629px;top:72px;fill:none;stroke:#a3a2ac;stroke-width:1.300;stroke-linecap:round;stroke-linejoin:round" width="10" height="14" viewBox="0 0 10 14"><path d="M2 1l6 6l-6 6"/></svg>
  <div class="abs" style="left:653.500px;top:69px;width:130.500px;height:20.600px;border-radius:11px;background:#ecebfb"></div>
  <div class="t" style="left:663px;top:73px;font-size:11.500px;color:#4e4d5a;letter-spacing:0.41px">Wednesday, 16 April</div>
  <svg style="left:1316px;top:73px;fill:none;stroke:#6b6a76;stroke-width:1.300;stroke-linecap:round" width="13" height="13" viewBox="0 0 13 13"><path d="M1 1l11 11M12 1L1 12"/></svg>

  <!-- schedule scrollbar -->
  <div class="abs" style="left:1352px;top:468px;width:4px;height:138px;background:#d6d6db;border-radius:2px"></div>

  <!-- schedule footer -->
  <div class="abs" style="left:510px;top:725px;width:846px;height:30px;background:#f8f8fc"></div>
  <div class="abs" style="left:1245px;top:734px;width:99px;height:19px;border-radius:10px;background:#ecebfb"></div>
  <div class="t" style="left:1253px;top:738px;font-size:11.500px;color:#6f6e7a;letter-spacing:0.51px">All activities</div>
  <svg style="left:1327.500px;top:740px;fill:none;stroke:#85848e;stroke-width:1.200;stroke-linecap:round;stroke-linejoin:round" width="11" height="7" viewBox="0 0 11 7"><path d="M1 1l4.500 4.500L10 1"/></svg>
 </div>
</div>
<!--RIGHT-END-->
<!--HEADER-START-->
<!-- header -->
<div class="abs" style="left:0;top:0;width:1357px;height:54px;background:#fff;box-shadow:0 1px 7px 1px rgba(40,40,60,.055)"></div>
<div class="t" style="left:22px;top:12.500px;font-size:19px;color:#3a3946;letter-spacing:0.74px">Invoice</div>
<!--HEADER-END-->
<!--FOOTER-START-->
<!-- footer -->
<div class="abs" style="left:0;top:755px;width:1357px;height:67px;background:#fff;box-shadow:0 -1px 6px rgba(40,40,60,.07)"></div>
<div class="abs" style="left:0;top:786px;width:1357px;height:33.500px;background:linear-gradient(180deg,rgba(20,20,40,0) 0%,rgba(20,20,40,.025) 45%,rgba(20,20,40,.075) 78%,rgba(20,20,40,.14) 100%);-webkit-mask-image:linear-gradient(90deg,#000 0%,#000 87%,transparent 94.500%);mask-image:linear-gradient(90deg,#000 0%,#000 87%,transparent 94.500%)"></div>
<div class="abs" style="left:0;top:819.500px;width:1357px;height:2.500px;background:#c6c6ce"></div>
<div class="abs" style="left:22.500px;top:770.500px;width:73.800px;height:36px;border-radius:4.500px;background:#8e5af8;box-shadow:0 2px 4px rgba(80,50,160,.3)"></div>
<div class="t" style="left:23px;top:782.500px;width:73px;text-align:center;font-size:13px;font-weight:bold;color:#fff;letter-spacing:.4px">Save</div>
<div class="abs" style="left:111.500px;top:770.500px;width:88px;height:36px;border:1px solid #d0d0d6;border-radius:4px;background:#fff"></div>
<div class="t" style="left:111.500px;top:782.500px;width:88px;text-align:center;font-size:13px;color:#6f6e7a;letter-spacing:.7px">Cancel</div>
<!--FOOTER-END-->
</div>
<div id="rightedge"></div>
<div class="abs" style="left:1588px;top:810px;width:12px;height:12px;background:#c9283d"></div>
<div class="abs" style="left:1570px;top:796px;width:30px;height:26px;background:#fff;border-right:3.500px solid #b1b0ba;border-bottom:2.500px solid #c6c6ce;border-bottom-right-radius:10px"></div>
<!--OVERLAY-START-->
<!-- red arrow annotation -->
<svg style="left:0;top:0;pointer-events:none" width="1600" height="822" viewBox="0 0 1600 822"><path d="M198.300 708.600L258.300 759.800L258.600 752.600A3 3 0 0 1 264.500 751.600L272.800 785.400L240 776A3 3 0 0 1 240.400 770.100L245.200 770.600z" fill="#f40000" stroke="#f40000" stroke-width=".6" stroke-linejoin="round"/></svg>
<!--OVERLAY-END-->
</div>
</body>
</html>
